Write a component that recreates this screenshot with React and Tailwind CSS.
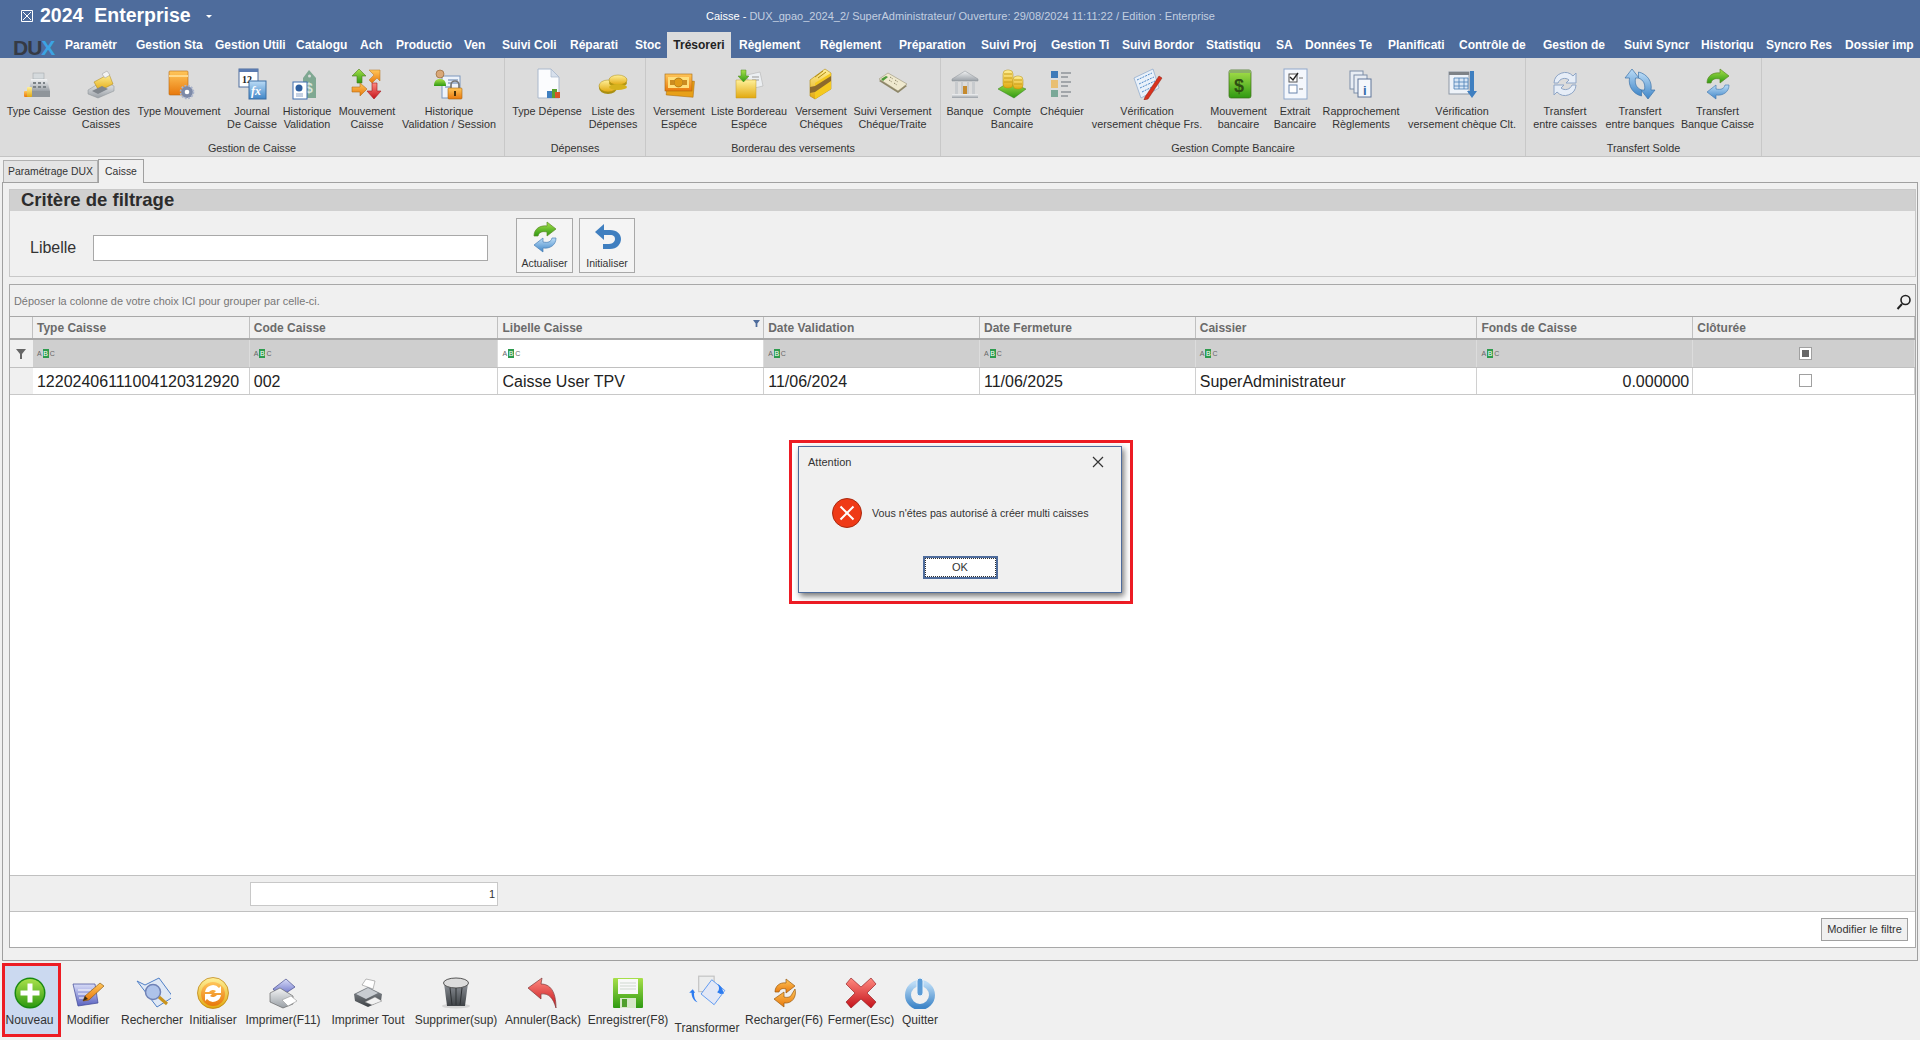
const font = "[font-family:'Liberation_Sans',Arial,sans-serif]"

function Ic({ children, className = 'w-8 h-8' }) {
  return <svg viewBox="0 0 32 32" className={className}>{children}</svg>
}

function Defs() {
  const stops = [
    ['gY', '#fff09a', '#e2a90f'], ['gG', '#a8e04a', '#2f9a12'], ['gB', '#bcdcf6', '#3f86c8'], ['gO', '#ffc65a', '#e8780c'],
    ['gR', '#ff8a80', '#c4121a'], ['gS', '#f2f3f4', '#9aa0a6'], ['gD', '#8d9298', '#3e4246'], ['gP', '#d8dcf8', '#5a62c0'],
  ]
  return (
    <svg className="absolute w-0 h-0">
      <defs>
        {stops.map(([id, a, b]) => (
          <linearGradient key={id} id={id} x1="0" y1="0" x2="0" y2="1">
            <stop offset="0" stopColor={a} />
            <stop offset="1" stopColor={b} />
          </linearGradient>
        ))}
      </defs>
    </svg>
  )
}

const Refresh = ({ top = 'url(#gG)', bottom = 'url(#gB)', line = '#5b8a2a', line2 = '#4a7fb5' }) => (
  <>
    <path d="M5 15C5 8 11 4 18 5V1l9 7-9 7v-4c-5-1-8 0-9 4z" fill={top} stroke={line} strokeWidth=".7" />
    <path d="M27 17c0 7-6 11-13 10v4l-9-7 9-7v4c5 1 8 0 9-4z" fill={bottom} stroke={line2} strokeWidth=".7" />
  </>
)

const icons = {
  typeCaisse: (
    <Ic>
      <rect x="12" y="5" width="11" height="6" fill="#d5dadd" stroke="#9aa0a5" strokeWidth=".5" />
      <path d="M10 11h16l3 12H8z" fill="url(#gS)" />
      <path d="M12 14h3v2h-3zm5 0h3v2h-3zm5 0h2v2h-2zm-10 4h3v2h-3zm5 0h3v2h-3zm5 0h3v2h-3z" fill="#7b8287" />
      <rect x="8" y="23" width="21" height="6" fill="#8f959a" />
      <rect x="3" y="23" width="6" height="6" rx="1" fill="url(#gO)" />
      <rect x="6" y="19" width="5" height="10" rx="1" fill="url(#gY)" />
    </Ic>
  ),
  gestionCaisse: (
    <Ic>
      <path d="M3 22 18 13l11 5v5L13 30 3 26z" fill="url(#gS)" stroke="#8a9095" strokeWidth=".5" />
      <path d="M9 14 24 6l4 10-14 7z" fill="url(#gY)" stroke="#a98214" strokeWidth=".5" />
      <path d="M17 6l5-3 3 4-5 3z" fill="#f3f3f3" stroke="#999" strokeWidth=".5" />
      <path d="M7 23l10-5 6 3-10 5z" fill="#80868c" />
    </Ic>
  ),
  typeMouvement: (
    <Ic>
      <rect x="6" y="3" width="19" height="24" rx="1" fill="url(#gO)" stroke="#b96a10" strokeWidth=".6" />
      <rect x="6" y="7" width="19" height="2" fill="#ffd98a" />
      <circle cx="24" cy="24" r="6" fill="#7d8aa8" />
      <circle cx="24" cy="24" r="6.5" fill="none" stroke="#aab4cc" strokeWidth="1.6" strokeDasharray="2 1.4" />
      <circle cx="24" cy="24" r="2.3" fill="#fff" />
    </Ic>
  ),
  journal: (
    <Ic>
      <rect x="3" y="1" width="19" height="18" fill="#fff" stroke="#4c6d9e" />
      <rect x="3" y="1" width="19" height="3" fill="#5b7bb0" />
      <text x="6" y="15" fontSize="10" fontWeight="700" fontFamily="Liberation Serif, serif" fill="#222">12</text>
      <rect x="13" y="13" width="17" height="18" fill="url(#gB)" stroke="#3c6ea3" />
      <text x="15" y="27" fontSize="12" fontStyle="italic" fontWeight="700" fontFamily="Liberation Serif, serif" fill="#fff">fx</text>
    </Ic>
  ),
  historique: (
    <Ic>
      <path d="M12 10l6-8 7 8v20H12z" fill="#7fa892" />
      <circle cx="18.500" cy="8" r="1.5" fill="#dbdbdb" />
      <text x="14" y="25" fontSize="14" fontWeight="700" fontFamily="Liberation Sans, sans-serif" fill="#d6e4dc">$</text>
      <rect x="2" y="14" width="14" height="17" fill="#fff" stroke="#3f6fb0" />
      <circle cx="8" cy="20" r="3.500" fill="#2e5f9f" />
      <path d="M5 26h7M5 28h7" stroke="#8aa3c7" />
    </Ic>
  ),
  mouvement: (
    <Ic>
      <path d="M8 1l7 7h-4v7H6V8H1z" fill="url(#gG)" stroke="#4d7d1d" strokeWidth=".6" />
      <path d="M18 2h11v11l-3-3-5 5-3-3 5-5z" fill="url(#gO)" stroke="#b5701a" strokeWidth=".5" />
      <path d="M1 19h8v-4l7 6-7 7v-4H1z" fill="url(#gO)" stroke="#b5701a" strokeWidth=".6" />
      <path d="M21 15h5v8h4l-7 8-7-8h5z" fill="url(#gR)" stroke="#a2181c" strokeWidth=".6" />
    </Ic>
  ),
  session: (
    <Ic>
      <rect x="9" y="8" width="18" height="22" fill="#eef3fa" stroke="#7d97bd" />
      <path d="M15 12h10M15 15h10M12 19h6" stroke="#5c7cab" />
      <circle cx="7" cy="6" r="4" fill="#d9a878" stroke="#8c5a2b" strokeWidth=".6" />
      <path d="M1 18c0-6 3-7 6-7s6 1 6 7z" fill="url(#gG)" />
      <path d="M18 21v-4a4 4 0 0 1 8 0v4" fill="none" stroke="#777" strokeWidth="1.700" />
      <rect x="15" y="20" width="14" height="11" rx="1" fill="url(#gO)" stroke="#a66512" strokeWidth=".6" />
      <rect x="21" y="23" width="2" height="5" fill="#4a3008" />
    </Ic>
  ),
  typeDepense: (
    <Ic>
      <path d="M7 1h13l8 8v21H7z" fill="#fbfcfe" stroke="#aab8cc" />
      <path d="M20 1v8h8z" fill="#d7e0ec" stroke="#aab8cc" strokeWidth=".7" />
      <rect x="16" y="23" width="6" height="7" fill="#3f7fc0" />
      <rect x="21" y="21" width="5" height="9" fill="#5aa030" />
      <rect x="24" y="24" width="5" height="6" fill="#d8552a" />
    </Ic>
  ),
  coins: (
    <Ic>
      <ellipse cx="11" cy="20" rx="9" ry="6" fill="#a88f12" />
      <ellipse cx="11" cy="18" rx="9" ry="6" fill="url(#gY)" stroke="#a98a10" strokeWidth=".5" />
      <ellipse cx="21" cy="15" rx="9" ry="4" fill="#b39712" />
      <ellipse cx="21" cy="12" rx="9" ry="5" fill="url(#gY)" stroke="#a98a10" strokeWidth=".5" />
      <ellipse cx="21" cy="19" rx="9" ry="3" fill="#d6b21c" />
    </Ic>
  ),
  bills: (
    <Ic>
      <rect x="4" y="12" width="27" height="16" fill="#e8a018" stroke="#a8690c" strokeWidth=".5" transform="rotate(5 16 18)" />
      <rect x="2" y="6" width="27" height="17" fill="url(#gO)" stroke="#a8690c" strokeWidth=".6" />
      <rect x="5" y="9" width="21" height="11" fill="#ffdf7c" />
      <circle cx="15.500" cy="14.500" r="4.500" fill="#e09a18" stroke="#8f5b0a" strokeWidth=".6" />
      <rect x="7" y="12" width="4" height="5" fill="#cc8c20" />
      <rect x="20" y="12" width="4" height="5" fill="#cc8c20" />
    </Ic>
  ),
  folderIn: (
    <Ic>
      <path d="M14 7 27 4l3 14-13 3z" fill="#eceff2" stroke="#aaa" strokeWidth=".5" />
      <path d="M19 9h7M19 12h7" stroke="#999" />
      <path d="M3 12h20v18H3z" fill="url(#gY)" stroke="#c09a28" strokeWidth=".5" />
      <path d="M8 2h5v6h3l-5.500 6L5 8h3z" fill="url(#gG)" stroke="#4f8a20" strokeWidth=".5" />
    </Ic>
  ),
  yellowBook: (
    <Ic>
      <path d="M5 12 20 1l6 4v16L10 31l-5-3z" fill="url(#gY)" stroke="#b08a10" strokeWidth=".6" />
      <path d="M10 15 26 5v16L10 31z" fill="#f5c91f" />
      <path d="M5 19l5-1 16-10v5L10 24l-5 1z" fill="#8d6a2c" />
      <path d="M10 9l8-6M13 10l8-6" stroke="#b08a10" />
    </Ic>
  ),
  cheque: (
    <Ic>
      <path d="M2 13 11 7l19 11-9 7z" fill="#8d8668" />
      <path d="M2 11 11 5l19 11-9 7z" fill="#efe9cf" stroke="#8c8467" strokeWidth=".5" />
      <path d="M4 11l5-3 2 1-5 4z" fill="#4d9a3a" />
      <path d="M13 9l3 2m2 1l3 2m-9-2l3 2m2 1l3 2" stroke="#7b7455" strokeDasharray="1 1" />
    </Ic>
  ),
  bank: (
    <Ic>
      <path d="M3 11 16 3l13 8v2H3z" fill="url(#gS)" stroke="#8b9096" strokeWidth=".5" />
      <path d="M6 13h3v13H6zm6 0h2v13h-2zm6 0h2v13h-2zm5 0h3v13h-3z" fill="#c8cbce" />
      <rect x="14" y="18" width="4" height="8" fill="#c58a2d" />
      <rect x="3" y="26" width="26" height="4" fill="url(#gS)" />
    </Ic>
  ),
  compte: (
    <Ic>
      <path d="M2 21l11-7 17 7-12 9z" fill="url(#gG)" stroke="#2f7f1a" strokeWidth=".5" />
      <rect x="7" y="2" width="10" height="18" rx="4" fill="url(#gY)" stroke="#b38d10" strokeWidth=".5" />
      <rect x="17" y="8" width="10" height="13" rx="4" fill="url(#gY)" stroke="#b38d10" strokeWidth=".5" />
      <path d="M8 6h8M8 10h8M8 14h8M18 12h8M18 16h8" stroke="#c89c14" />
    </Ic>
  ),
  chequier: (
    <Ic>
      <rect x="5" y="3" width="7" height="7" fill="#3f7ab8" />
      <rect x="5" y="12" width="7" height="8" fill="#e9bf72" />
      <rect x="5" y="22" width="7" height="7" fill="#7aa897" />
      <path d="M15 5h10M15 9h7M15 14h10M15 18h7M15 24h10M15 28h7" stroke="#8f9499" strokeWidth="1.300" />
    </Ic>
  ),
  verifFrs: (
    <Ic>
      <path d="M3 10 22 1l6 19-18 10z" fill="#e9f1fa" stroke="#7a9cc6" strokeWidth=".6" />
      <path d="M6 12l15-7M8 16l15-7M9 20l15-7M11 24l12-6" stroke="#4f89c9" strokeDasharray="2 1" />
      <path d="M14 29 28 8l3 2-14 21-4 1z" fill="#d8321e" stroke="#8c1c10" strokeWidth=".5" />
    </Ic>
  ),
  greenBook: (
    <Ic>
      <rect x="6" y="2" width="22" height="28" rx="2" fill="url(#gG)" stroke="#3c6f18" strokeWidth=".7" />
      <rect x="6" y="2" width="22" height="3" fill="#8cb068" />
      <text x="11" y="24" fontSize="18" fontWeight="700" fontFamily="Liberation Sans, sans-serif" fill="#2e4e12">$</text>
    </Ic>
  ),
  extrait: (
    <Ic>
      <rect x="5" y="1" width="23" height="30" fill="#f4f7fc" stroke="#8fa8cc" />
      <rect x="10" y="6" width="8" height="8" fill="#fff" stroke="#555" />
      <path d="M11 9l3 3 5-7" fill="none" stroke="#222" strokeWidth="1.400" />
      <path d="M20 10h4M20 21h4" stroke="#777" />
      <rect x="10" y="17" width="8" height="8" fill="#fff" stroke="#6a86ad" />
    </Ic>
  ),
  rapprochement: (
    <Ic>
      <rect x="5" y="3" width="13" height="18" fill="#e8edf4" stroke="#7d8ea8" />
      <rect x="9" y="7" width="13" height="18" fill="#e8edf4" stroke="#7d8ea8" />
      <rect x="13" y="11" width="13" height="18" fill="#f4f7fb" stroke="#5f7598" />
      <text x="18" y="27" fontSize="13" fontWeight="700" fontFamily="Liberation Sans, sans-serif" fill="#356aa8">i</text>
    </Ic>
  ),
  verifClt: (
    <Ic>
      <rect x="3" y="4" width="20" height="22" fill="#eef3f9" stroke="#8d98a6" />
      <rect x="3" y="4" width="20" height="3" fill="#7d8287" />
      <path d="M8 10h14v11H8zM8 14h14M8 18h14M13 10v11M18 10v11" fill="#d8e6f5" stroke="#4a7fb5" strokeWidth=".8" />
      <path d="M24 3h4v20h3l-5 7-5-7h3z" fill="#3f7fc0" />
    </Ic>
  ),
  transfer1: (
    <Ic>
      <path d="M5 15A11 11 0 0 1 24 8l3-3v10H17l3-3a7 7 0 0 0-11 3z" fill="#e6edf7" stroke="#8ea5c6" />
      <path d="M27 17A11 11 0 0 1 8 24l-3 3V17h10l-3 3a7 7 0 0 0 11-3z" fill="#e6edf7" stroke="#8ea5c6" />
    </Ic>
  ),
  transfer2: (
    <Ic>
      <path d="M8 1l7 9h-3.500c-1 6 1 10 6 12v6C9 26 4 18 5.500 10H1z" fill="url(#gB)" stroke="#3d74aa" strokeWidth=".7" />
      <path d="M24 31l-7-9h3.500c1-6-1-10-6-12V4c9 2 14 10 12.500 18H31z" fill="url(#gB)" stroke="#3d74aa" strokeWidth=".7" />
    </Ic>
  ),
  transfer3: <Ic><Refresh /></Ic>,
  undo: (
    <Ic>
      <path d="M13 3 4 11l9 8v-5h6c4 0 5 2 5 4s-2 5-6 5h-6v5h7c7 0 11-5 11-10s-4-9-11-9h-6z" fill="#3f7fc0" />
    </Ic>
  ),
  plus: (
    <Ic>
      <circle cx="16" cy="16" r="15.500" fill="#1a8a12" />
      <circle cx="16" cy="16" r="14" fill="url(#gG)" />
      <path d="M13.500 6.500h5v7h7v5h-7v7h-5v-7h-7v-5h7z" fill="#fff" />
    </Ic>
  ),
  modifier: (
    <Ic>
      <path d="M1 7h22l3 19-20 3z" fill="url(#gP)" stroke="#3c4595" strokeWidth=".7" />
      <path d="M6 13h13M6 17h12M7 21h10" stroke="#fff" />
      <path d="M11 24l2-5 15-13 4 3-15 14z" fill="url(#gO)" stroke="#80500a" strokeWidth=".6" />
      <path d="M11 24l2-5 3 3z" fill="#3a2a12" />
    </Ic>
  ),
  rechercher: (
    <Ic className="w-[38px] h-8">
      <path d="M1 4l8 4 14-7 14 19-16 10z" fill="#dfe8f5" stroke="#4f7fc6" />
      <circle cx="17" cy="15" r="7.500" fill="#aec3ea" stroke="#6f82b6" strokeWidth="1.500" />
      <path d="M23 20l8 7" stroke="#c9941e" strokeWidth="3" />
    </Ic>
  ),
  initialiser: (
    <Ic>
      <circle cx="16" cy="16" r="15.500" fill="url(#gY)" stroke="#b97d08" strokeWidth=".7" />
      <circle cx="16" cy="17" r="12" fill="url(#gO)" />
      <path d="M8 15a8 8 0 0 1 14-4l2-2v7h-7l2-2a5 5 0 0 0-7 1zM24 18a8 8 0 0 1-14 4l-2 2v-7h7l-2 2a5 5 0 0 0 7-1z" fill="#fff" />
    </Ic>
  ),
  imprimer: (
    <Ic>
      <path d="M6 12 19 2l9 8-15 10z" fill="url(#gP)" stroke="#30387d" strokeWidth=".6" />
      <path d="M3 16l10-5 13 8v8l-10 4-13-6z" fill="url(#gS)" stroke="#555" strokeWidth=".6" />
      <path d="M15 23l9-4 6 5-9 5z" fill="#fff" stroke="#888" strokeWidth=".5" />
    </Ic>
  ),
  imprimerTout: (
    <Ic>
      <path d="M10 8l4-6 9 2-2 8z" fill="#fff" stroke="#777" strokeWidth=".5" />
      <path d="M2 17l14-7 14 7-1 7-13 6-13-6z" fill="url(#gD)" />
      <path d="M4 17l12-6 10 5-12 6z" fill="#c9cdd2" />
      <path d="M13 25l10-5 7 4-10 4z" fill="#f2f2f2" stroke="#777" strokeWidth=".4" />
    </Ic>
  ),
  supprimer: (
    <Ic>
      <ellipse cx="16" cy="29" rx="14" ry="2.500" fill="#d5d5d5" />
      <path d="M4 6h24l-3 23H7z" fill="url(#gD)" />
      <ellipse cx="16" cy="6" rx="12.500" ry="5" fill="#dcdcdc" stroke="#555" />
      <path d="M10 11l2 17m4-17v17m6-17-2 17" stroke="#2f3235" />
    </Ic>
  ),
  annuler: (
    <Ic>
      <path d="M1 11 15 1l-1 6c9 0 15 7 15 24-3-10-7-15-15-14v5z" fill="url(#gR)" stroke="#7f3a3a" strokeWidth=".7" />
    </Ic>
  ),
  enregistrer: (
    <Ic>
      <rect x="1" y="1" width="30" height="30" rx="1" fill="url(#gG)" />
      <rect x="6" y="2" width="20" height="15" fill="#f8f8f8" />
      <path d="M8 6h16M8 9h16M8 12h16" stroke="#cfd8cf" />
      <rect x="8" y="21" width="16" height="10" fill="#d6e7c8" />
      <rect x="10" y="22" width="5" height="8" fill="#4f9f2c" />
    </Ic>
  ),
  transformer: (
    <Ic className="w-12 h-[38px] -mt-[2px]">
      <rect x="9" y="1" width="13" height="13" fill="#eceded" stroke="#c3c3c3" />
      <path d="M20 4 31 13 22 25 11 16z" fill="#e3e8f6" stroke="#2d7cf0" strokeWidth=".6" />
      <path d="M1 15l3-3 2 3h-1c0 4 1 6 3 8-3-1-5-4-5-8z" fill="#2d7cf0" />
      <path d="M31 15l-3 1-3-1c2-2 1-5-1-7 3 1 5 3 6 6z" fill="#2d7cf0" transform="rotate(10 28 12)" />
    </Ic>
  ),
  recharger: (
    <Ic>
      <path d="M7 15C7 9 12 5 18 6V2l9 7-9 7v-4c-4-1-6 0-7 3z" fill="url(#gO)" stroke="#9a5a10" strokeWidth=".7" />
      <path d="M27 12c2 8-3 15-11 14v4L6 22l10-7v5c4 1 7 0 8-3z" fill="url(#gO)" stroke="#9a5a10" strokeWidth=".7" />
    </Ic>
  ),
  fermer: (
    <Ic>
      <path d="M6 1l10 9 10-9 5 6-9 9 9 9-5 6-10-9-10 9-5-6 9-9-9-9z" fill="url(#gR)" stroke="#8a0f14" strokeWidth=".6" />
    </Ic>
  ),
  quitter: (
    <Ic>
      <circle cx="16" cy="18" r="12" fill="none" stroke="url(#gB)" strokeWidth="6" />
      <rect x="13" y="1" width="6" height="18" rx="3" fill="#5a9bd6" stroke="#e8f2fb" />
    </Ic>
  ),
}

const menu = [
  ['Paramètr', 'w-[71px]'], ['Gestion Sta', 'w-[79px]'], ['Gestion Utili', 'w-[81px]'], ['Catalogu', 'w-[64px]'], ['Ach', 'w-[36px]'],
  ['Productio', 'w-[68px]'], ['Ven', 'w-[38px]'], ['Suivi Coli', 'w-[68px]'], ['Réparati', 'w-[65px]'], ['Stoc', 'w-[32px]'],
]
const menu2 = [
  ['Règlement', 'w-[81px]'], ['Règlement', 'w-[79px]'], ['Préparation', 'w-[82px]'], ['Suivi Proj', 'w-[70px]'], ['Gestion Ti', 'w-[71px]'],
  ['Suivi Bordor', 'w-[84px]'], ['Statistiqu', 'w-[70px]'], ['SA', 'w-[29px]'], ['Données Te', 'w-[83px]'], ['Planificati', 'w-[71px]'],
  ['Contrôle de', 'w-[84px]'], ['Gestion de', 'w-[81px]'], ['Suivi Syncr', 'w-[77px]'], ['Historiqu', 'w-[65px]'], ['Syncro Res', 'w-[79px]'], ['Dossier imp', 'w-[70px]'],
]

const groups = [
  {
    label: 'Gestion de Caisse', w: 'w-[505px]',
    items: [
      ['typeCaisse', 'Type Caisse', '', 'w-[73px]'], ['gestionCaisse', 'Gestion des', 'Caisses', 'w-[56px]'], ['typeMouvement', 'Type Mouvement', '', 'w-[100px]'],
      ['journal', 'Journal', 'De Caisse', 'w-[46px]'], ['historique', 'Historique', 'Validation', 'w-[64px]'], ['mouvement', 'Mouvement', 'Caisse', 'w-[56px]'],
      ['session', 'Historique', 'Validation / Session', 'w-[108px]'],
    ],
  },
  {
    label: 'Dépenses', w: 'w-[141px]',
    items: [['typeDepense', 'Type Dépense', '', 'w-[84px]'], ['coins', 'Liste des', 'Dépenses', 'w-[48px]']],
  },
  {
    label: 'Borderau des versements', w: 'w-[295px]',
    items: [
      ['bills', 'Versement', 'Espéce', 'w-[66px]'], ['folderIn', 'Liste Bordereau', 'Espéce', 'w-[74px]'], ['yellowBook', 'Versement', 'Chéques', 'w-[70px]'],
      ['cheque', 'Suivi Versement', 'Chéque/Traite', 'w-[73px]'],
    ],
  },
  {
    label: 'Gestion Compte Bancaire', w: 'w-[585px]',
    items: [
      ['bank', 'Banque', '', 'w-[48px]'], ['compte', 'Compte', 'Bancaire', 'w-[46px]'], ['chequier', 'Chéquier', '', 'w-[54px]'],
      ['verifFrs', 'Vérification', 'versement chèque Frs.', 'w-[116px]'], ['greenBook', 'Mouvement', 'bancaire', 'w-[67px]'], ['extrait', 'Extrait', 'Bancaire', 'w-[46px]'],
      ['rapprochement', 'Rapprochement', 'Règlements', 'w-[86px]'], ['verifClt', 'Vérification', 'versement chèque Clt.', 'w-[116px]'],
    ],
  },
  {
    label: 'Transfert Solde', w: 'w-[236px]',
    items: [['transfer1', 'Transfert', 'entre caisses', 'w-[78px]'], ['transfer2', 'Transfert', 'entre banques', 'w-[72px]'], ['transfer3', 'Transfert', 'Banque Caisse', 'w-[83px]']],
  },
]

const columns = [
  ['Type Caisse', 'w-[217px]'], ['Code Caisse', 'w-[249px]'], ['Libelle Caisse', 'w-[266px]'], ['Date Validation', 'w-[216px]'], ['Date Fermeture', 'w-[216px]'],
  ['Caissier', 'w-[282px]'], ['Fonds de Caisse', 'w-[216px]'], ['Clôturée', 'w-[222px]'],
]
const row = ['12202406111004120312920', '002', 'Caisse User TPV', '11/06/2024', '11/06/2025', 'SuperAdministrateur', '0.000000']

const tools = [
  ['modifier', 'Modifier', 'w-[54px]'], ['rechercher', 'Rechercher', 'w-[74px]'], ['initialiser', 'Initialiser', 'w-[48px]'], ['imprimer', 'Imprimer(F11)', 'w-[92px]'],
  ['imprimerTout', 'Imprimer Tout', 'w-[78px]'], ['supprimer', 'Supprimer(sup)', 'w-[98px]'], ['annuler', 'Annuler(Back)', 'w-[76px]'], ['enregistrer', 'Enregistrer(F8)', 'w-[94px]'],
  ['transformer', 'Transformer', 'w-[64px]'], ['recharger', 'Recharger(F6)', 'w-[90px]'], ['fermer', 'Fermer(Esc)', 'w-[64px]'], ['quitter', 'Quitter', 'w-[54px]'],
]

function AbcIcon() {
  return (
    <span className="flex items-center gap-[1px] text-[7px] leading-[9px] text-[#666]">
      <span>A</span>
      <span className="bg-[#2e9b4e] text-white w-[6px] text-center">B</span>
      <span>C</span>
    </span>
  )
}

function MenuBar() {
  return (
    <div className="h-[26px] flex items-center bg-[#4e6c9c] text-white font-bold text-[12px] whitespace-nowrap">
      <div className="w-[65px] h-full pl-[13px] pt-[4px] text-[21px] leading-[23px] tracking-[-1px]">
        <span className="text-[#353a45]">DU</span><span className="text-[#3ba4e4]">X</span>
      </div>
      {menu.map(([t, w], i) => <div key={i} className={w}>{t}</div>)}
      <div className="w-[64px] h-full mr-[8px] bg-[#dcdcdc] text-[#222] flex items-center justify-center">Trésoreri</div>
      {menu2.map(([t, w], i) => <div key={i} className={w}>{t}</div>)}
    </div>
  )
}

function Ribbon() {
  return (
    <div className="h-[99px] flex bg-[#dcdcdc] border-b border-[#c4c4c4] text-[#333] text-[10.8px] leading-[13px]">
      {groups.map(g => (
        <div key={g.label} className={`${g.w} shrink-0 border-r border-[#c8c8c8] flex flex-col`}>
          <div className="h-[83px] flex">
            {g.items.map(([icon, a, b, w]) => (
              <div key={a + b} className={`${w} shrink-0 flex flex-col items-center pt-[10px] whitespace-nowrap`}>
                <div className="h-8 flex justify-center">{icons[icon]}</div>
                <div className="mt-[5px]">{a}</div>
                <div>{b}</div>
              </div>
            ))}
          </div>
          <div className="text-center leading-[16px]">{g.label}</div>
        </div>
      ))}
    </div>
  )
}

function Tabs() {
  return (
    <div className="h-[25px] flex items-end pl-[3px] text-[10.4px] text-[#333]">
      <div className="w-[95px] h-[22px] bg-[#e4e4e4] border border-b-0 border-[#b0b0b0] flex items-center justify-center whitespace-nowrap">Paramétrage DUX</div>
      <div className="w-[46px] h-[24px] bg-[#f0f0f0] border border-b-0 border-[#a0a0a0] flex items-center justify-center relative top-[1px] z-10">Caisse</div>
    </div>
  )
}

function FilterPanel() {
  return (
    <div className="h-[88px] border border-[#c8c8c8]">
      <div className="h-[21px] bg-[#d0d0d0] pl-[11px] font-bold text-[18.5px] leading-[20px] text-[#2c2c2c]">Critère de filtrage</div>
      <div className="h-[65px] flex items-start pt-[7px]">
        <div className="ml-[20px] w-[63px] mt-[17px] text-[16px] leading-[26px] text-[#333]">Libelle</div>
        <div className="w-[395px] h-[26px] mt-[17px] bg-white border border-[#a8a8a8]" />
        <button className="ml-[28px] w-[57px] h-[55px] bg-[#f4f4f4] border border-[#a8a8a8] flex flex-col items-center pt-[2px] text-[10.5px] text-[#333]">
          {icons.transfer3}
          <span className="mt-[3px]">Actualiser</span>
        </button>
        <button className="ml-[6px] w-[56px] h-[55px] bg-[#f4f4f4] border border-[#a8a8a8] flex flex-col items-center pt-[2px] text-[10.5px] text-[#333]">
          {icons.undo}
          <span className="mt-[3px]">Initialiser</span>
        </button>
      </div>
    </div>
  )
}

function Grid() {
  return (
    <div className="mt-[7px] h-[664px] border border-[#a8a8a8] flex flex-col bg-white">
      <div className="h-[32px] bg-[#f0f0f0] border-b border-[#a8a8a8] flex items-center justify-between pl-[4px] pr-[3px] pt-[2px] text-[10.9px] text-[#777]">
        <span>Déposer la colonne de votre choix ICI pour grouper par celle-ci.</span>
        <svg viewBox="0 0 16 16" className="w-4 h-4" fill="none" stroke="#222" strokeWidth="1.600">
          <circle cx="9.500" cy="6" r="4.500" />
          <path d="M6 10l-4.500 5" strokeWidth="2" />
        </svg>
      </div>
      <div className="h-[23px] flex bg-[#f0f0f0] border-b-2 border-[#a8a8a8] font-bold text-[12px] text-[#6b6b6b] leading-[23px]">
        <div className="w-[23px] border-r border-[#c0c0c0]" />
        {columns.map(([t, w]) => (
          <div key={t} className={`${w} pl-[4px] border-r border-[#c0c0c0] relative`}>
            {t}
            {t === 'Libelle Caisse' && (
              <svg viewBox="0 0 8 8" className="w-[7px] h-[7px] absolute right-[3px] top-[3px]"><path d="M0 0h8L5 4v4H3V4z" fill="#4e6c9c" /></svg>
            )}
          </div>
        ))}
      </div>
      <div className="h-[28px] flex bg-[#cfcfcf] border-b border-[#c0c0c0]">
        <div className="w-[23px] bg-[#f0f0f0] flex items-center justify-center">
          <svg viewBox="0 0 10 10" className="w-[10px] h-[10px]"><path d="M0 0h10L6 5v5H4V5z" fill="#666" /></svg>
        </div>
        {columns.map(([t, w], i) => (
          <div key={t} className={`${w} pl-[4px] flex items-center border-r border-[#dcdcdc] ${i === 2 ? 'bg-white' : ''}`}>
            {i < 7 ? <AbcIcon /> : (
              <div className="ml-[102px] w-[13px] h-[13px] bg-white border border-[#a0a0a0] flex items-center justify-center">
                <div className="w-[7px] h-[7px] bg-[#666]" />
              </div>
            )}
          </div>
        ))}
      </div>
      <div className="h-[27px] flex border-b border-[#c8c8c8] text-[16px] leading-[27px] text-[#222] whitespace-nowrap">
        <div className="w-[23px] bg-[#f0f0f0]" />
        {columns.map(([t, w], i) => (
          <div key={t} className={`${w} pl-[4px] pr-[3px] border-r border-[#d0d0d0] ${i === 6 ? 'text-right' : ''}`}>
            {i < 7 ? row[i] : <div className="ml-[102px] mt-[6px] w-[13px] h-[13px] bg-white border border-[#a0a0a0]" />}
          </div>
        ))}
      </div>
      <div className="flex-1" />
      <div className="h-[37px] bg-[#efefef] border-y border-[#c0c0c0] pl-[240px] pt-[6px]">
        <div className="w-[248px] h-[24px] bg-white border border-[#c8c8c8] text-right pr-[2px] text-[11px] leading-[22px] text-[#333]">1</div>
      </div>
      <div className="h-[35px] flex justify-end items-center pr-[7px]">
        <button className="w-[87px] h-[23px] bg-[#f0f0f0] border border-[#a0a0a0] text-[11px] text-[#333]">Modifier le filtre</button>
      </div>
    </div>
  )
}

function Toolbar() {
  return (
    <div className="flex-1 flex pl-[2px] pt-[2px] text-[12px] leading-[14px] text-[#333] whitespace-nowrap">
      <div className="w-[59px] h-[74px] bg-[#cbd9f0] border-[3px] border-[#ed1c24] flex flex-col items-center pt-[11px] pr-[4px]">
        {icons.plus}
        <div className="mt-[4px] -mx-[4px]">Nouveau</div>
      </div>
      {tools.map(([icon, t, w]) => (
        <div key={t} className={`${w} shrink-0 flex flex-col items-center pt-[14px]`}>
          <div className="h-8 flex justify-center">{icons[icon]}</div>
          <div className={icon === 'transformer' ? 'mt-[12px]' : 'mt-[4px]'}>{t}</div>
        </div>
      ))}
    </div>
  )
}

function Dialog() {
  return (
    <div className="absolute left-[789px] top-[440px] w-[344px] h-[164px] border-[3px] border-[#ed1c24] pl-[6px] pt-[3px] bg-white">
      <div className="w-[324px] h-[147px] bg-[#f0f0f0] border border-[#4e6c9c] shadow-[2px_3px_6px_rgba(0,0,0,0.55)] flex flex-col text-[10.7px] text-[#333]">
        <div className="h-[30px] flex items-center justify-between pl-[9px] pr-[17px]">
          <span className="text-[11px]">Attention</span>
          <svg viewBox="0 0 12 12" className="w-3 h-3" stroke="#333" strokeWidth="1.200"><path d="M1 1l10 10M11 1 1 11" /></svg>
        </div>
        <div className="flex items-center h-[42px] mt-[15px] pl-[33px]">
          <svg viewBox="0 0 30 30" className="w-[30px] h-[30px]">
            <circle cx="15" cy="15" r="14.500" fill="#ef3a17" stroke="#a92a10" />
            <path d="M8.500 8.500l13 13M21.500 8.500l-13 13" stroke="#fff" strokeWidth="2" />
          </svg>
          <span className="ml-[10px] whitespace-nowrap">Vous n'étes pas autorisé à créer multi caisses</span>
        </div>
        <div className="flex-1 flex justify-center pt-[22px]">
          <button className="w-[75px] h-[23px] bg-white border-2 border-[#4e6c9c] outline-1 outline-dotted -outline-offset-3 outline-[#333] text-[11px]">OK</button>
        </div>
      </div>
    </div>
  )
}

export default function App() {
  return (
    <div className={`relative w-[1920px] h-[1040px] overflow-hidden bg-[#f0f0f0] flex flex-col ${font}`}>
      <Defs />
      <div className="h-[32px] flex items-center bg-[#4e6c9c] text-white">
        <div className="w-[227px] pl-[21px] flex items-center text-[19.5px] font-bold whitespace-pre">
          <svg viewBox="0 0 12 12" className="w-3 h-3 mr-[7px]" fill="none" stroke="#fff"><path d="M.5.5h11v11H.5zM2 2l8 8M10 2l-8 8" /></svg>
          2024  Enterprise
          <span className="ml-[15px] w-0 h-0 border-x-[3px] border-x-transparent border-t-[3px] border-t-white" />
        </div>
        <div className="ml-[479px] text-[11px] text-[#c3cfe0] whitespace-nowrap">
          <span className="text-white">Caisse - </span>DUX_gpao_2024_2/ SuperAdministrateur/ Ouverture: 29/08/2024 11:11:22 / Edition : Enterprise
        </div>
      </div>
      <MenuBar />
      <Ribbon />
      <Tabs />
      <div className="ml-[2px] w-[1916px] h-[779px] border border-[#a0a0a0] pt-[6px] pl-[6px] pr-px">
        <FilterPanel />
        <Grid />
      </div>
      <Toolbar />
      <Dialog />
    </div>
  )
}
